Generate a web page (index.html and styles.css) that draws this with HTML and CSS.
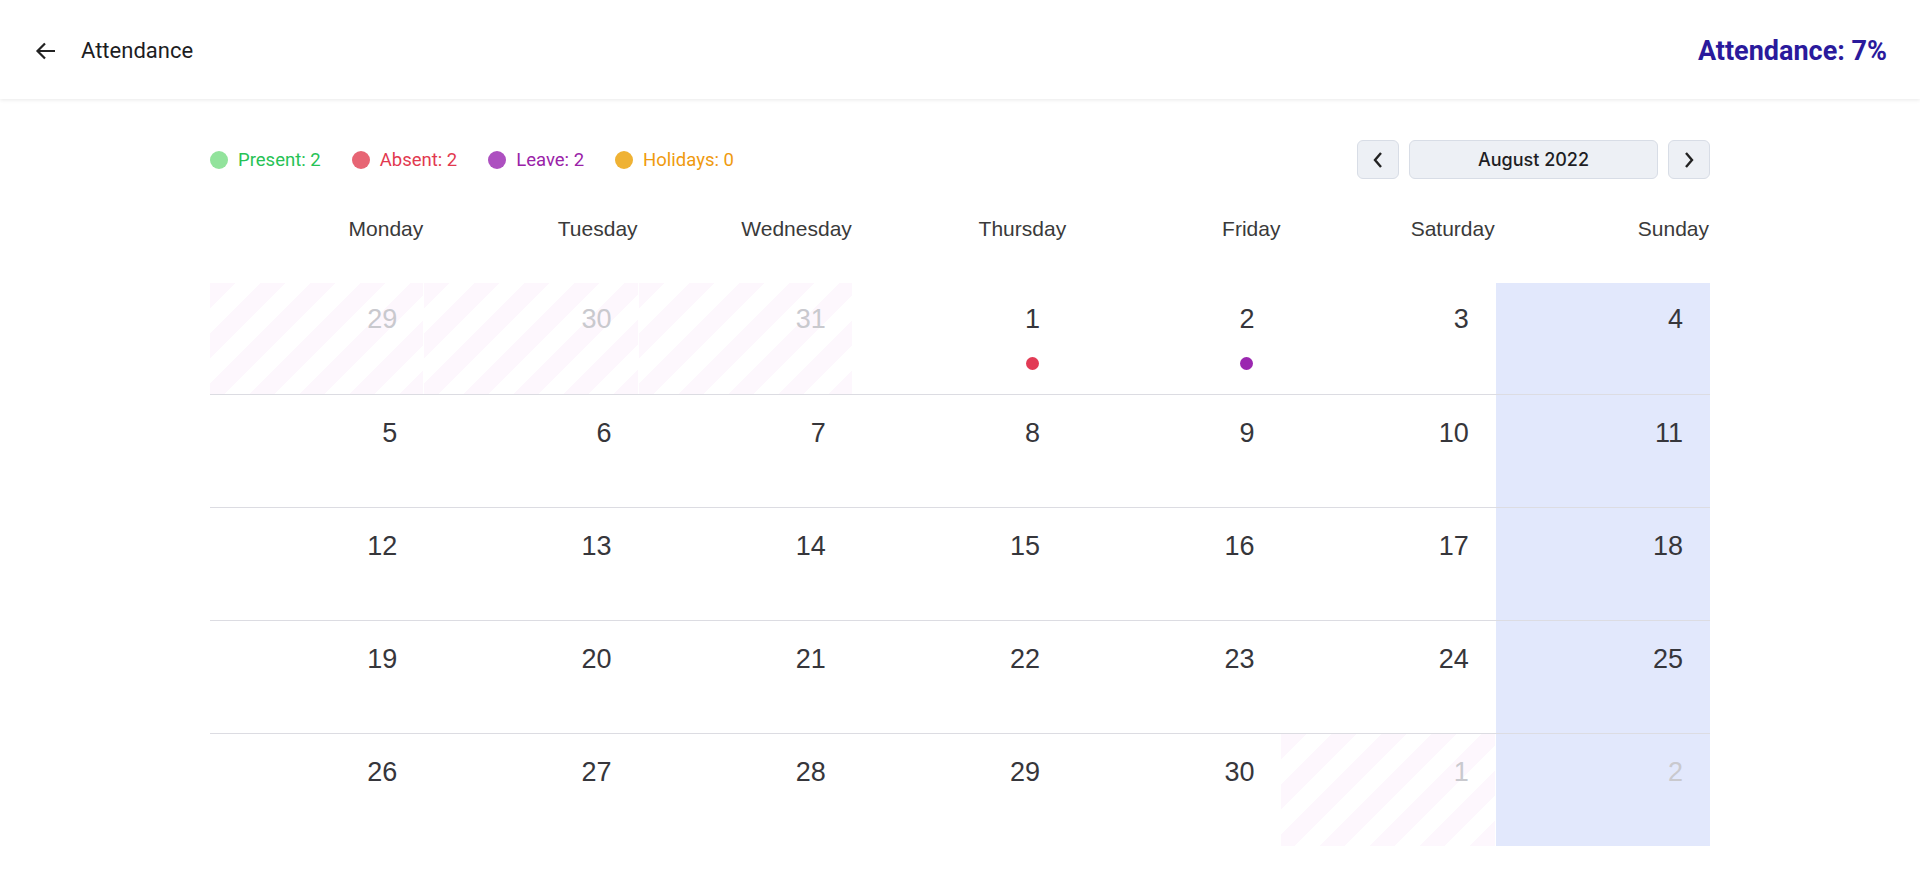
FILE: index.html
```html
<!DOCTYPE html>
<html lang="en">
<head>
<meta charset="utf-8">
<title>Attendance</title>
<link rel="stylesheet" href="styles.css">
</head>
<body>
<header class="topbar">
  <div class="topbar-left">
    <button class="back" aria-label="Back">
      <svg width="22" height="20" viewBox="0 0 22 20"><path d="M20 10H3M10 2.5L2.5 10l7.5 7.5" fill="none" stroke="#222" stroke-width="2.2" stroke-linecap="butt" stroke-linejoin="miter"/></svg>
    </button>
    <h1 class="title">Attendance</h1>
  </div>
  <div class="score">Attendance: 7%</div>
</header>

<main class="calendar">
  <div class="toolbar">
    <ul class="legend">
      <li class="legend-item present"><span class="legend-dot"></span>Present: 2</li>
      <li class="legend-item absent"><span class="legend-dot"></span>Absent: 2</li>
      <li class="legend-item leave"><span class="legend-dot"></span>Leave: 2</li>
      <li class="legend-item holiday"><span class="legend-dot"></span>Holidays: 0</li>
    </ul>
    <div class="nav">
      <button class="nav-btn" aria-label="Previous month">
        <svg width="12" height="18" viewBox="0 0 12 18"><path d="M9 2L3 9l6 7" fill="none" stroke="#222" stroke-width="2.4"/></svg>
      </button>
      <div class="month">August 2022</div>
      <button class="nav-btn" aria-label="Next month">
        <svg width="12" height="18" viewBox="0 0 12 18"><path d="M3 2l6 7-6 7" fill="none" stroke="#222" stroke-width="2.4"/></svg>
      </button>
    </div>
  </div>

  <div class="weekdays">
    <div class="weekday">Monday</div>
    <div class="weekday">Tuesday</div>
    <div class="weekday">Wednesday</div>
    <div class="weekday">Thursday</div>
    <div class="weekday">Friday</div>
    <div class="weekday">Saturday</div>
    <div class="weekday">Sunday</div>
  </div>

  <div class="grid">
    <div class="week first">
      <div class="day other"><div class="day-inner"><span class="num">29</span></div></div>
      <div class="day other"><div class="day-inner"><span class="num">30</span></div></div>
      <div class="day other"><div class="day-inner"><span class="num">31</span></div></div>
      <div class="day"><div class="day-inner"><span class="num">1</span><span class="mark absent"></span></div></div>
      <div class="day"><div class="day-inner"><span class="num">2</span><span class="mark leave"></span></div></div>
      <div class="day"><div class="day-inner"><span class="num">3</span></div></div>
      <div class="day sunday"><div class="day-inner"><span class="num">4</span></div></div>
    </div>
    <div class="week">
      <div class="day"><div class="day-inner"><span class="num">5</span></div></div>
      <div class="day"><div class="day-inner"><span class="num">6</span></div></div>
      <div class="day"><div class="day-inner"><span class="num">7</span></div></div>
      <div class="day"><div class="day-inner"><span class="num">8</span></div></div>
      <div class="day"><div class="day-inner"><span class="num">9</span></div></div>
      <div class="day"><div class="day-inner"><span class="num">10</span></div></div>
      <div class="day sunday"><div class="day-inner"><span class="num">11</span></div></div>
    </div>
    <div class="week">
      <div class="day"><div class="day-inner"><span class="num">12</span></div></div>
      <div class="day"><div class="day-inner"><span class="num">13</span></div></div>
      <div class="day"><div class="day-inner"><span class="num">14</span></div></div>
      <div class="day"><div class="day-inner"><span class="num">15</span></div></div>
      <div class="day"><div class="day-inner"><span class="num">16</span></div></div>
      <div class="day"><div class="day-inner"><span class="num">17</span></div></div>
      <div class="day sunday"><div class="day-inner"><span class="num">18</span></div></div>
    </div>
    <div class="week">
      <div class="day"><div class="day-inner"><span class="num">19</span></div></div>
      <div class="day"><div class="day-inner"><span class="num">20</span></div></div>
      <div class="day"><div class="day-inner"><span class="num">21</span></div></div>
      <div class="day"><div class="day-inner"><span class="num">22</span></div></div>
      <div class="day"><div class="day-inner"><span class="num">23</span></div></div>
      <div class="day"><div class="day-inner"><span class="num">24</span></div></div>
      <div class="day sunday"><div class="day-inner"><span class="num">25</span></div></div>
    </div>
    <div class="week">
      <div class="day"><div class="day-inner"><span class="num">26</span></div></div>
      <div class="day"><div class="day-inner"><span class="num">27</span></div></div>
      <div class="day"><div class="day-inner"><span class="num">28</span></div></div>
      <div class="day"><div class="day-inner"><span class="num">29</span></div></div>
      <div class="day"><div class="day-inner"><span class="num">30</span></div></div>
      <div class="day other"><div class="day-inner"><span class="num">1</span></div></div>
      <div class="day sunday other-sun"><div class="day-inner"><span class="num">2</span></div></div>
    </div>
  </div>
</main>
</body>
</html>
```

FILE: styles.css
```css
* { box-sizing: border-box; }

html, body {
  margin: 0;
  padding: 0;
  background: #ffffff;
}

body {
  font-family: Roboto, "Liberation Sans", sans-serif;
  color: #222;
}

.topbar {
  height: 99px;
  display: flex;
  align-items: center;
  justify-content: space-between;
  padding: 2px 33px 0 35px;
  background: #fff;
  box-shadow: 0 1px 4px rgba(0, 0, 0, 0.09);
}

.topbar-left {
  display: flex;
  align-items: center;
  gap: 24px;
}

.back {
  border: 0;
  background: none;
  padding: 0;
  width: 22px;
  height: 20px;
  display: flex;
  align-items: center;
  cursor: pointer;
}

.title {
  margin: 0;
  font-family: Roboto, sans-serif;
  font-size: 22px;
  font-weight: 400;
  color: #1d1d1f;
}

.score {
  font-family: Roboto, sans-serif;
  font-size: 27px;
  font-weight: 700;
  color: #2a1a9c;
}

.calendar {
  width: 1500px;
  margin: 0 auto;
}

.toolbar {
  margin-top: 41px;
  height: 39px;
  display: flex;
  align-items: center;
  justify-content: space-between;
}

.legend {
  list-style: none;
  margin: 0;
  padding: 0;
  display: flex;
  align-items: center;
  gap: 31px;
  font-family: Roboto, sans-serif;
  font-size: 18.5px;
}

.legend-item {
  display: flex;
  align-items: center;
  gap: 10px;
}

.legend-dot {
  width: 18px;
  height: 18px;
  border-radius: 50%;
}

.present { color: #26c255; }
.present .legend-dot { background: #92e39c; }
.absent { color: #e2394f; }
.absent .legend-dot { background: #e76574; }
.leave { color: #9a22a8; }
.leave .legend-dot { background: #ad50c0; }
.holiday { color: #ef9a0f; }
.holiday .legend-dot { background: #efb234; }

.nav {
  display: flex;
  align-items: center;
  gap: 10px;
}

.nav-btn,
.month {
  height: 39px;
  border: 1px solid #d8dde6;
  background: #edf0f5;
  border-radius: 6px;
  display: flex;
  align-items: center;
  justify-content: center;
}

.nav-btn {
  width: 42px;
  padding: 0;
  cursor: pointer;
}

.month {
  width: 249px;
  font-family: Inter, sans-serif;
  font-size: 18px;
  font-weight: 500;
  color: #1e1e24;
}

.weekdays {
  margin-top: 38px;
  display: grid;
  grid-template-columns: repeat(7, 1fr);
}

.weekday {
  text-align: right;
  padding-right: 1px;
  font-family: "Liberation Sans", Arial, sans-serif;
  font-size: 21px;
  line-height: 24px;
  color: #3a3a3a;
}

.grid {
  margin-top: 42px;
}

.week {
  display: grid;
  grid-template-columns: repeat(7, 1fr);
  height: 113px;
  border-top: 1px solid #dcdce2;
}

.week.first {
  height: 111px;
  border-top: 0;
}

.day {
  display: flex;
  justify-content: flex-end;
  align-items: flex-start;
  padding: 22px 27px 0 0;
}

.week.first .day {
  padding-top: 20px;
}

.day-inner {
  display: flex;
  flex-direction: column;
  align-items: center;
}

.num {
  font-family: "Liberation Sans", Arial, sans-serif;
  font-size: 27px;
  line-height: 32px;
  color: #36363b;
}

.mark {
  width: 13px;
  height: 13px;
  border-radius: 50%;
  margin-top: 22px;
}

.mark.absent { background: #e23b55; }
.mark.leave { background: #9b27b0; }

.day.other {
  background: repeating-linear-gradient(135deg, #fdf7fd 0 17.7px, #ffffff 17.7px 35.4px);
  box-shadow: inset -1px 0 0 #ffffff;
}

.day.other .num,
.day.other-sun .num {
  color: #c9c9ce;
}

.day.sunday {
  background: #e2e8fc;
}
```
